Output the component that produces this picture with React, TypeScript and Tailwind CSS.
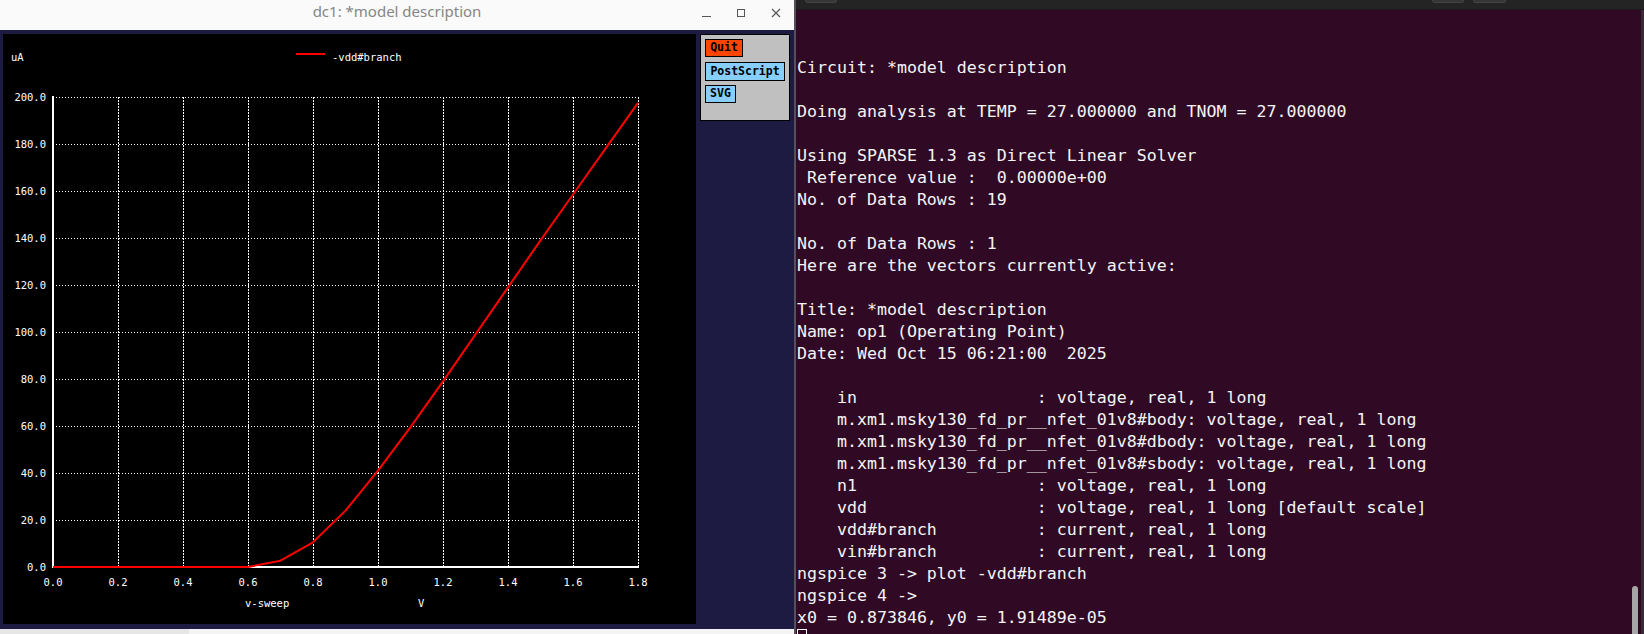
import React from 'react';

// ngspice plot window + ubuntu terminal

const X0 = 53;
const Y0 = 567;
const PX_PER_V = 325;
const PX_PER_UA = 2.35;

const curve: [number, number][] = [
    [0, 0],
    [0.6, 0],
    [0.7, 2.7],
    [0.8, 10.5],
    [0.9, 24],
    [1.0, 41],
    [1.1, 59.5],
    [1.2, 79],
    [1.3, 99],
    [1.4, 119],
    [1.5, 139],
    [1.6, 158.5],
    [1.7, 178],
    [1.8, 197.5],
];

const yLabels = ['200.0', '180.0', '160.0', '140.0', '120.0', '100.0', '80.0', '60.0', '40.0', '20.0', '0.0'];
const xLabels = ['0.0', '0.2', '0.4', '0.6', '0.8', '1.0', '1.2', '1.4', '1.6', '1.8'];

const termLines = [
    '',
    '',
    'Circuit: *model description',
    '',
    'Doing analysis at TEMP = 27.000000 and TNOM = 27.000000',
    '',
    'Using SPARSE 1.3 as Direct Linear Solver',
    ' Reference value :  0.00000e+00',
    'No. of Data Rows : 19',
    '',
    'No. of Data Rows : 1',
    'Here are the vectors currently active:',
    '',
    'Title: *model description',
    'Name: op1 (Operating Point)',
    'Date: Wed Oct 15 06:21:00  2025',
    '',
    '    in                  : voltage, real, 1 long',
    '    m.xm1.msky130_fd_pr__nfet_01v8#body: voltage, real, 1 long',
    '    m.xm1.msky130_fd_pr__nfet_01v8#dbody: voltage, real, 1 long',
    '    m.xm1.msky130_fd_pr__nfet_01v8#sbody: voltage, real, 1 long',
    '    n1                  : voltage, real, 1 long',
    '    vdd                 : voltage, real, 1 long [default scale]',
    '    vdd#branch          : current, real, 1 long',
    '    vin#branch          : current, real, 1 long',
    'ngspice 3 -> plot -vdd#branch',
    'ngspice 4 -> ',
    'x0 = 0.873846, y0 = 1.91489e-05',
];

function Plot() {
    const pts = curve
        .map(([v, ua]) => `${X0 + v * PX_PER_V},${Y0 - ua * PX_PER_UA}`)
        .join(' ');
    const plotFont = { fontFamily: '"DejaVu Sans Mono", monospace', fontSize: 10.5 };

    return (
        <svg width={693} height={590} viewBox="3 34 693 590" className="block bg-black">
            {/* horizontal grid */}
            {Array.from({ length: 10 }).map((_, i) => (
                <line
                    key={'h' + i}
                    x1={X0}
                    x2={638}
                    y1={97.5 + i * 47}
                    y2={97.5 + i * 47}
                    stroke="#fff"
                    strokeWidth={1}
                    strokeDasharray="1 2"
                    shapeRendering="crispEdges"
                />
            ))}
            {/* vertical grid */}
            {Array.from({ length: 9 }).map((_, i) => (
                <line
                    key={'v' + i}
                    x1={118.5 + i * 65}
                    x2={118.5 + i * 65}
                    y1={97}
                    y2={Y0}
                    stroke="#fff"
                    strokeWidth={1.5}
                    strokeDasharray="2 1"
                    shapeRendering="crispEdges"
                />
            ))}
            {/* axes */}
            <line x1={X0} x2={X0} y1={96} y2={Y0 + 1} stroke="#fff" strokeWidth={2} />
            <line x1={X0} x2={639} y1={Y0} y2={Y0} stroke="#fff" strokeWidth={2} />

            <polyline points={pts} fill="none" stroke="#ff0000" strokeWidth={2} strokeLinejoin="round" />

            {yLabels.map((l, i) => (
                <text
                    key={l}
                    x={46}
                    y={97 + i * 47 + 4}
                    textAnchor="end"
                    fill="#fff"
                    style={plotFont}
                >
                    {l}
                </text>
            ))}
            {xLabels.map((l, i) => (
                <text key={l} x={X0 + i * 65} y={586} textAnchor="middle" fill="#fff" style={plotFont}>
                    {l}
                </text>
            ))}

            <text x={11} y={61} fill="#fff" style={plotFont}>
                uA
            </text>
            <line x1={296} x2={325} y1={54} y2={54} stroke="#ff0000" strokeWidth={2} />
            <text x={332} y={61} fill="#fff" style={plotFont}>
                -vdd#branch
            </text>
            <text x={245} y={607} fill="#fff" style={plotFont}>
                v-sweep
            </text>
            <text x={418} y={607} fill="#fff" style={plotFont}>
                V
            </text>
        </svg>
    );
}

function PlotWindow() {
    return (
        <div className="flex flex-col w-[794px] h-[634px] shrink-0">
            <div
                className="grid grid-cols-[1fr_auto_1fr] items-center h-[30px] bg-[#fafafa] text-[15px] text-[#858585]"
                style={{ fontFamily: '"Noto Sans", "Open Sans", sans-serif' }}
            >
                <div />
                <span className="leading-none -mt-[7px]">dc1: *model description</span>
                <div className="flex justify-end items-center gap-[25px] pr-[13px] -mt-[5px]">
                    <svg width="9" height="10" viewBox="0 0 9 10">
                        <line x1="0" x2="9" y1="8.5" y2="8.5" stroke="#555" strokeWidth="1" />
                    </svg>
                    <svg width="10" height="10" viewBox="0 0 10 10">
                        <rect x="1.5" y="1.5" width="7" height="7" fill="none" stroke="#555" strokeWidth="1" />
                    </svg>
                    <svg width="10" height="10" viewBox="0 0 10 10">
                        <path d="M1 1 L9 9 M9 1 L1 9" stroke="#555" strokeWidth="1.2" />
                    </svg>
                </div>
            </div>
            <div className="flex h-[599px] bg-[#1e1b42] pt-[4px] pl-[3px]">
                <Plot />
                <div
                    className="ml-[4px] w-[90px] h-[87px] bg-[#c0c0c0] border border-black flex flex-col items-start pl-[4px] pt-[4px] gap-[4px] text-[11.5px] font-bold text-black"
                    style={{ fontFamily: '"DejaVu Sans Mono", monospace' }}
                >
                    <div className="w-[38px] h-[18px] bg-[#ff4500] border border-black flex items-center justify-center leading-none">
                        Quit
                    </div>
                    <div className="mt-[1px] w-[80px] h-[19px] bg-[#87cefa] border border-black flex items-center justify-center leading-none">
                        PostScript
                    </div>
                    <div className="w-[31px] h-[18px] bg-[#87cefa] border border-black flex items-center justify-center leading-none">
                        SVG
                    </div>
                </div>
            </div>
            <div className="flex h-[5px]">
                <div className="w-[189px] bg-[#e6e6e6]" />
                <div className="flex-1 bg-[#f4f4f4]" />
            </div>
        </div>
    );
}

function Terminal() {
    return (
        <div className="relative flex flex-col flex-1 h-[634px] bg-[#300a24] overflow-hidden">
            <div className="flex justify-between h-[10px] bg-[#242424] border-b border-[#1b1b1b] pl-[9px] pr-[138px] shrink-0">
                <div className="w-[32px] h-[3px] rounded-b-[6px] bg-[#363636] border-x border-b border-[#444]" />
                <div className="flex gap-[9px]">
                    <div className="w-[32px] h-[3px] rounded-b-[6px] bg-[#363636] border-x border-b border-[#444]" />
                    <div className="w-[33px] h-[3px] rounded-b-[6px] bg-[#363636] border-x border-b border-[#444]" />
                </div>
            </div>
            <div
                className="pt-[3px] pl-[1px] text-[16.6px] leading-[22px] text-[#f4f4f4] whitespace-pre"
                style={{ fontFamily: '"DejaVu Sans Mono", "Liberation Mono", monospace' }}
            >
                {termLines.map((l, i) => (
                    <div key={i} className="h-[22px]">
                        {l}
                    </div>
                ))}
                <div className="h-[22px] flex items-start">
                    <span className="block w-[10px] h-[18px] border border-white" />
                </div>
            </div>
            {/* scrollbar */}
            <div className="absolute right-[6px] top-[586px] w-[6px] h-[60px] rounded-t-full bg-[#a6a6a6]" />
            <div className="absolute right-0 top-[10px] w-[3px] h-[624px] bg-[#3a2a36]" />
        </div>
    );
}

export default function App() {
    return (
        <div className="flex w-[1644px] h-[634px] overflow-hidden bg-[#300a24]">
            <PlotWindow />
            <div className="w-[2px] h-[634px] bg-[#55505a] shrink-0" />
            <Terminal />
        </div>
    );
}
